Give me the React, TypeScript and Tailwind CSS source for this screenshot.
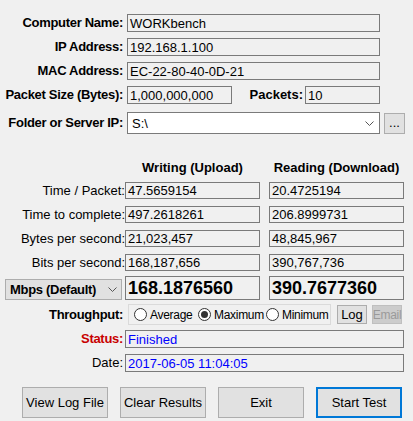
import React from 'react';

const Chevron = ({ className = '' }: { className?: string }) => (
  <svg width="9" height="5" viewBox="0 0 9 5" className={className}>
    <path d="M0.5 0.5 L4.5 4.5 L8.5 0.5" fill="none" stroke="#555" strokeWidth="1" />
  </svg>
);

const Radio = ({ checked, label, className = '' }: { checked?: boolean; label: string; className?: string }) => (
  <div className={`flex shrink-0 items-center ${className}`}>
    <div className="flex h-[13px] w-[13px] shrink-0 items-center justify-center rounded-full border border-[#333] bg-white">
      {checked && <div className="h-[7px] w-[7px] rounded-full bg-[#333]" />}
    </div>
    <span className="ml-[3px] text-[12px] tracking-[-0.3px]">{label}</span>
  </div>
);

const App: React.FC = () => {
  const field = 'flex items-center border border-[#7a7a7a] bg-[#f0f0f0] pl-[2px] leading-none';
  const btn = 'flex items-center justify-center border border-[#adadad] bg-[#e1e1e1] leading-none';
  const bold = 'flex w-[123px] shrink-0 justify-end font-bold tracking-[-0.3px]';

  return (
    <div className="h-[421px] w-[413px] whitespace-nowrap bg-[#f0f0f0] font-['Liberation_Sans',Arial,sans-serif] text-[13px] text-black">
      {/* identity */}
      <div className="flex flex-col gap-[6px] pt-[14px]">
        <div className="flex h-[18px] items-center">
          <span className={bold}>Computer Name:</span>
          <div className={`${field} ml-[4px] h-[18px] w-[253px]`}>WORKbench</div>
        </div>
        <div className="flex h-[18px] items-center">
          <span className={bold}>IP Address:</span>
          <div className={`${field} ml-[4px] h-[18px] w-[253px]`}>192.168.1.100</div>
        </div>
        <div className="flex h-[18px] items-center">
          <span className={bold}>MAC Address:</span>
          <div className={`${field} ml-[4px] h-[18px] w-[253px]`}>EC-22-80-40-0D-21</div>
        </div>
        <div className="flex h-[18px] items-center">
          <span className={bold}>Packet Size (Bytes):</span>
          <div className={`${field} ml-[4px] h-[18px] w-[105px]`}>1,000,000,000</div>
          <span className="flex w-[73px] justify-end pr-[2px] font-bold">Packets:</span>
          <div className={`${field} h-[18px] w-[75px]`}>10</div>
        </div>
        <div className="mt-[2px] flex h-[22px] items-center">
          <span className={bold}>Folder or Server IP:</span>
          <div className="ml-[4px] flex h-[22px] w-[253px] items-center justify-between border border-[#7a7a7a] bg-white pl-[4px] pr-[5px] leading-none">
            <span>S:\</span>
            <Chevron />
          </div>
          <div className="ml-[4px] flex h-[21px] w-[21px] items-end justify-center border border-[#adadad] bg-[#e1e1e1] pb-[4px] leading-none">...</div>
        </div>
      </div>

      {/* results */}
      <div className="mt-[26px] flex h-[16px] items-center font-bold">
        <span className="ml-[125px] w-[135px] text-center">Writing (Upload)</span>
        <span className="ml-[9px] w-[135px] text-center">Reading (Download)</span>
      </div>
      <div className="mt-[6px] flex flex-col gap-[7px]">
        {[
          ['Time / Packet:', '47.5659154', '20.4725194'],
          ['Time to complete:', '497.2618261', '206.8999731'],
          ['Bytes per second:', '21,023,457', '48,845,967'],
          ['Bits per second:', '168,187,656', '390,767,736'],
        ].map(([label, w, r]) => (
          <div key={label} className="flex h-[17px] items-center">
            <span className="flex w-[125px] justify-end">{label}</span>
            <div className={`${field} h-[17px] w-[135px]`}>{w}</div>
            <div className={`${field} ml-[9px] h-[17px] w-[135px]`}>{r}</div>
          </div>
        ))}
      </div>

      <div className="mt-[5px] flex h-[24px] items-end">
        <div className="ml-[5px] flex h-[21px] w-[117px] items-center justify-between border border-[#adadad] bg-[#e1e1e1] pl-[4px] pr-[4px] leading-none">
          <span className="text-[13px] font-bold tracking-[-0.3px]">Mbps (Default)</span>
          <Chevron />
        </div>
        <div className={`${field} ml-[3px] h-[24px] w-[135px] text-[18px] font-bold`}>168.1876560</div>
        <div className={`${field} ml-[9px] h-[24px] w-[135px] text-[18px] font-bold`}>390.7677360</div>
      </div>

      <div className="mt-[4px] flex h-[21px] items-center">
        <span className={bold}>Throughput:</span>
        <div className="ml-[5px] flex h-[21px] w-[203px] shrink-0 items-center border border-[#dadada] pl-[5px] leading-none">
          <Radio label="Average" className="w-[64px]" />
          <Radio label="Maximum" checked className="w-[68px]" />
          <Radio label="Minimum" />
        </div>
        <div className={`${btn} ml-[6px] h-[19px] w-[30px] shrink-0`}>Log</div>
        <div className="ml-[5px] flex h-[19px] w-[30px] shrink-0 items-center justify-center border border-[#bfbfbf] bg-[#cccccc] text-[12px] leading-none tracking-[-0.3px] text-[#9a9a9a]">
          Email
        </div>
      </div>

      <div className="mt-[5px] flex h-[18px] items-center">
        <span className={`${bold} text-[#c80000]`}>Status:</span>
        <div className={`${field} ml-[2px] h-[18px] w-[279px] text-[#0000ff]`}>Finished</div>
      </div>
      <div className="mt-[6px] flex h-[18px] items-center">
        <span className="flex w-[123px] justify-end">Date:</span>
        <div className={`${field} ml-[2px] h-[18px] w-[279px] text-[#0000ff]`}>2017-06-05 11:04:05</div>
      </div>

      <div className="ml-[22px] mt-[15px] flex gap-[12px]">
        <div className={`${btn} h-[31px] w-[86px]`}>View Log File</div>
        <div className={`${btn} h-[31px] w-[86px]`}>Clear Results</div>
        <div className={`${btn} h-[31px] w-[86px]`}>Exit</div>
        <div className="flex h-[31px] w-[86px] items-center justify-center border-2 border-[#0078d7] bg-[#e1e1e1] leading-none">Start Test</div>
      </div>
    </div>
  );
};

export default App;
